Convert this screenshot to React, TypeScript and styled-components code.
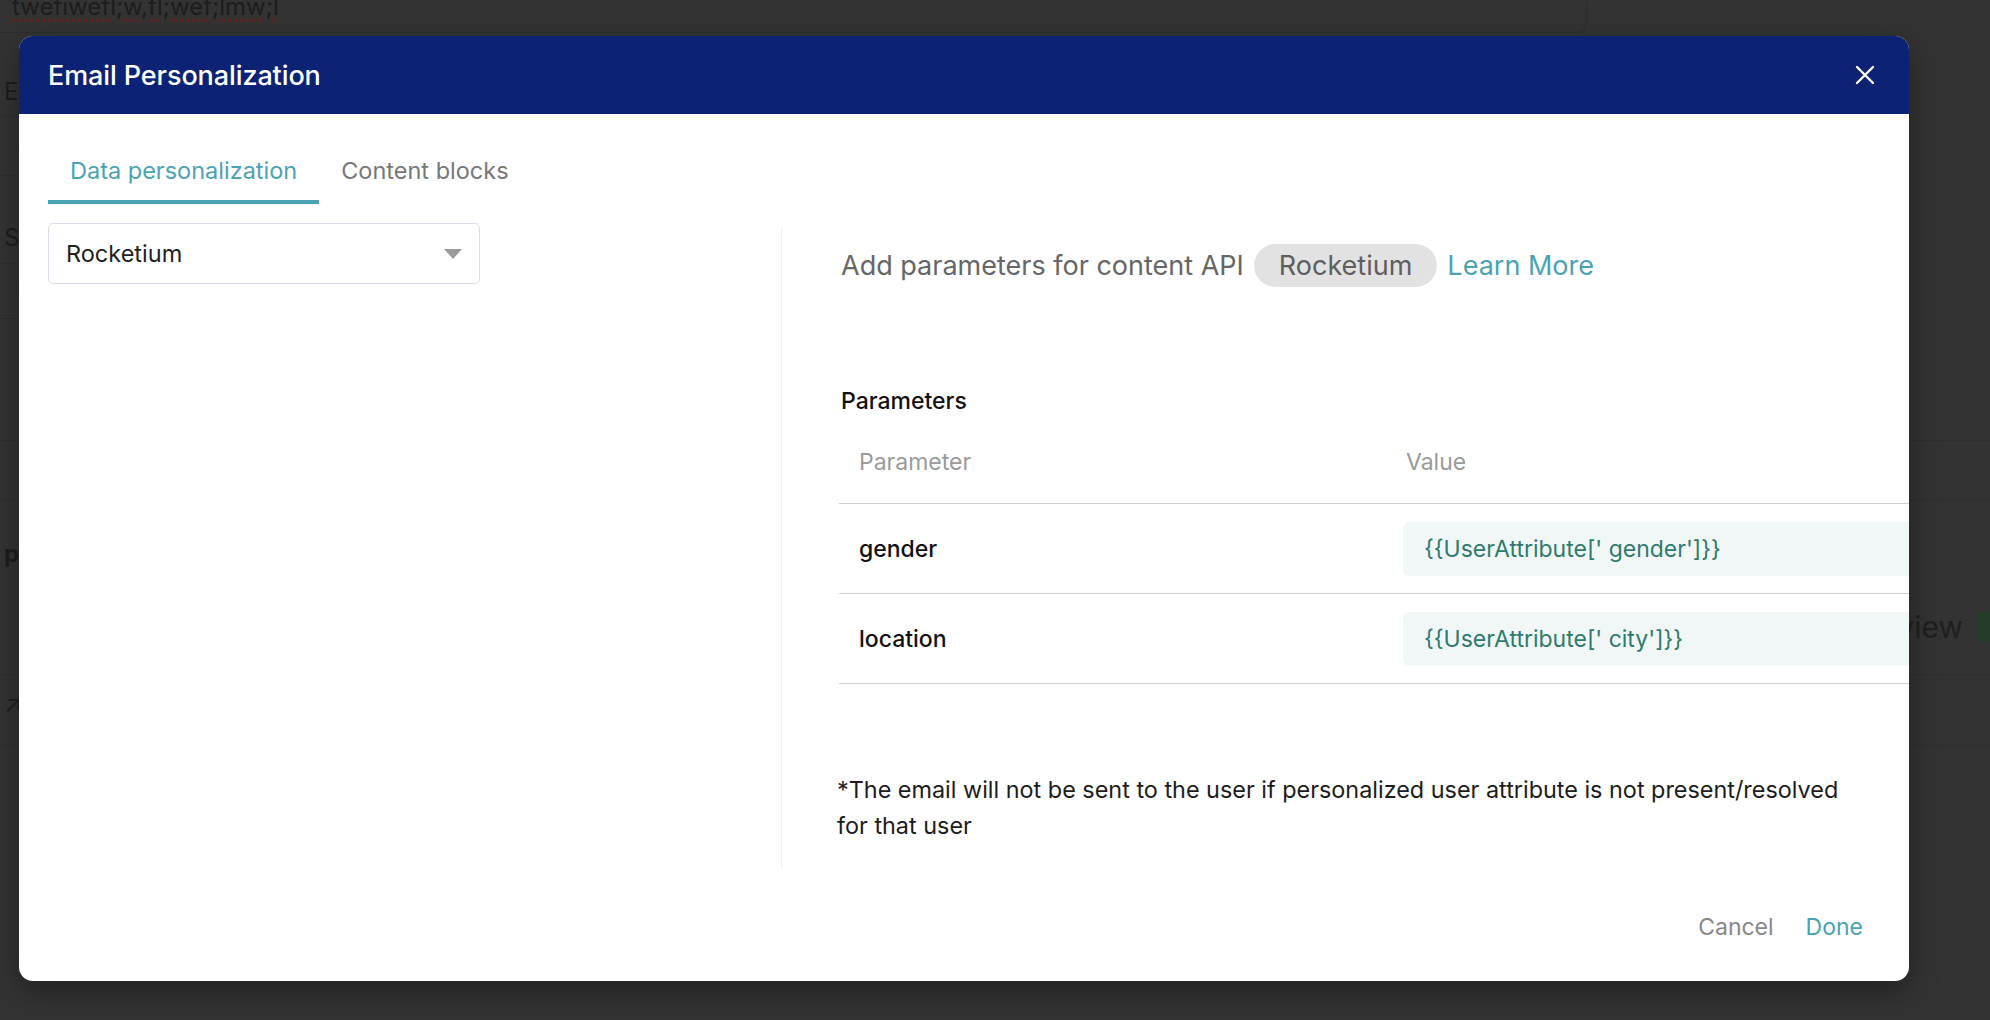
import * as React from "react";
import styled, { createGlobalStyle } from "styled-components";

const GlobalStyle = createGlobalStyle`
  html, body {
    margin: 0;
    padding: 0;
    background: #333333;
  }
  body {
    font-family: Inter, "Noto Sans", "Liberation Sans", sans-serif;
  }
  * {
    box-sizing: border-box;
  }
`;

const Screen = styled.div`
  position: relative;
  width: 1990px;
  height: 1020px;
  overflow: hidden;
  background: #333333;
`;

// page behind the overlay, dimmed
const BackPage = styled.div`
  display: flex;
  flex-direction: column;
  width: 100%;
  height: 100%;
  color: #1d1d1d;
  font-size: 24px;
`;

const BackInput = styled.div`
  flex: 0 0 33px;
  width: 1587px;
  padding-left: 12px;
  border-radius: 0 0 10px 0;
  border-bottom: 1px solid #2d2d2d;
  border-right: 1px solid #2d2d2d;
  line-height: 14px;
  overflow: hidden;
`;

const Squiggle = styled.span`
  text-decoration: underline dotted #5b2626;
  text-underline-offset: 4px;
  text-decoration-thickness: 3px;
`;

const BackRow = styled.div<{ $h: number; $line?: boolean }>`
  flex: 0 0 ${(p) => p.$h}px;
  display: flex;
  align-items: center;
  justify-content: space-between;
  padding-left: 4px;
  border-bottom: ${(p) => (p.$line ? "1px solid #2e2e2e" : "none")};
`;

const BackField = styled.div<{ $h: number }>`
  flex: 0 0 ${(p) => p.$h}px;
  display: flex;
  align-items: center;
  width: 900px;
  margin-left: -10px;
  padding-left: 26px;
  border: 1px solid #2d2d2d;
  border-radius: 8px;
  color: #262626;
  font-size: 22px;
`;

const BackRight = styled.div`
  display: flex;
  align-items: center;
  gap: 14px;
  margin-right: -31px;
  font-size: 30px;
  color: #1f1f1f;
`;

const BackBadge = styled.span`
  display: flex;
  align-items: center;
  justify-content: center;
  width: 44px;
  height: 30px;
  border-radius: 5px;
  background: #243b27;
  color: #3e5f41;
  font-size: 20px;
  font-weight: 700;
`;

const Layer = styled.div`
  position: absolute;
  inset: 0;
  padding: 36px 0 0 19px;
`;

const Modal = styled.div`
  width: 1890px;
  height: 945px;
  display: flex;
  flex-direction: column;
  background: #ffffff;
  border-radius: 14px;
  overflow: hidden;
  box-shadow: 0 10px 30px rgba(0, 0, 0, 0.35);
`;

const Header = styled.div`
  flex: 0 0 78px;
  display: flex;
  align-items: center;
  justify-content: space-between;
  padding: 0 33px 0 29px;
  background: #0b2275;
  color: #ffffff;
`;

const Title = styled.h1`
  margin: 0;
  font-size: 27px;
  font-weight: 500;
  letter-spacing: -0.1px;
`;

const CloseButton = styled.button`
  display: flex;
  align-items: center;
  justify-content: center;
  width: 22px;
  height: 22px;
  padding: 0;
  border: none;
  background: none;
  cursor: pointer;
`;

const Body = styled.div`
  flex: 1;
  display: flex;
  flex-direction: column;
  padding: 24px 0 0 29px;
  min-height: 0;
`;

const Tabs = styled.div`
  display: flex;
`;

const Tab = styled.button<{ $active?: boolean }>`
  padding: 18px 22px 14px;
  border: none;
  border-bottom: 4px solid ${(p) => (p.$active ? "#4aa3b5" : "transparent")};
  background: none;
  font-family: inherit;
  font-size: 23.5px;
  line-height: 30px;
  color: ${(p) => (p.$active ? "#4aa3b5" : "#777777")};
  cursor: pointer;
`;

const Content = styled.div`
  display: flex;
  margin-top: 19px;
`;

const LeftColumn = styled.div`
  flex: 0 0 733px;
`;

const Select = styled.div`
  display: flex;
  align-items: center;
  justify-content: space-between;
  width: 432px;
  height: 61px;
  padding: 0 17px 0 17px;
  border: 1px solid #dcdde8;
  border-radius: 5px;
  font-size: 23.5px;
  color: #1f1f1f;
`;

const Panel = styled.div`
  flex: 1;
  min-width: 0;
  margin-top: 3px;
  padding: 18px 0 26px 59px;
  border-left: 1px solid #f0f0f0;
`;

const ApiRow = styled.div`
  display: flex;
  align-items: center;
  gap: 10px;
  height: 43px;
  font-size: 27px;
  color: #666666;
`;

const Pill = styled.span`
  display: inline-flex;
  align-items: center;
  height: 43px;
  padding: 0 25px;
  border-radius: 22px;
  background: #e2e2e2;
  color: #5e5e5e;
`;

const LearnMore = styled.a`
  color: #4aa3b5;
  text-decoration: none;
`;

const SectionLabel = styled.div`
  margin-top: 100px;
  font-size: 23px;
  line-height: 28px;
  font-weight: 500;
  color: #111111;
`;

const Table = styled.div`
  width: 1200px;
  margin-left: -2px;
`;

const TableRow = styled.div<{ $head?: boolean }>`
  display: grid;
  grid-template-columns: 547px 1fr;
  align-items: center;
  padding: ${(p) => (p.$head ? "32px 0 26px" : "18px 0 17px")};
  border-bottom: 1px solid #cfcfcf;
  font-size: 23px;
  line-height: 30px;
  color: ${(p) => (p.$head ? "#9a9a9a" : "#111111")};
  font-weight: ${(p) => (p.$head ? 400 : 500)};
`;

const Cell = styled.div<{ $pad: number }>`
  padding-left: ${(p) => p.$pad}px;
`;

const ValueBox = styled.div`
  display: flex;
  align-items: center;
  height: 54px;
  padding-left: 21px;
  border-radius: 6px;
  background: #f1f7f7;
  color: #2e7b6d;
  font-weight: 400;
`;

const Note = styled.p`
  max-width: 1030px;
  margin: 88px 0 0 -4px;
  font-size: 23.4px;
  line-height: 36px;
  color: #1c1c1c;
`;

const Footer = styled.div`
  flex: 0 0 108px;
  display: flex;
  align-items: center;
  justify-content: flex-end;
  gap: 32px;
  padding-right: 46px;
`;

const FooterButton = styled.button<{ $primary?: boolean }>`
  padding: 0;
  border: none;
  background: none;
  font-family: inherit;
  font-size: 23px;
  color: ${(p) => (p.$primary ? "#4aa3b5" : "#888888")};
  cursor: pointer;
`;

const params = [
  { name: "gender", value: "{{UserAttribute[' gender']}}" },
  { name: "location", value: "{{UserAttribute[' city']}}" },
];

const App: React.FC = () => {
  return (
    <Screen>
      <GlobalStyle />
      <BackPage>
        <BackInput>
          <Squiggle>twefiwefl;w,fl;wef;lmw;l</Squiggle>
        </BackInput>
        <BackRow $h={33} />
        <BackRow $h={50}>E</BackRow>
        <BackField $h={60}>-</BackField>
        <BackRow $h={36} />
        <BackRow $h={51}>S</BackRow>
        <BackField $h={56}>S</BackField>
        <BackRow $h={122} $line />
        <BackRow $h={59} $line />
        <BackRow $h={26} />
        <BackRow $h={54}>
          <b>pl</b>
        </BackRow>
        <BackRow $h={95} $line>
          <span />
          <BackRight>
            view
            <BackBadge>N</BackBadge>
          </BackRight>
        </BackRow>
        <BackRow $h={56}>↗</BackRow>
        <BackRow $h={15} $line />
      </BackPage>

      <Layer>
        <Modal>
          <Header>
            <Title>Email Personalization</Title>
            <CloseButton aria-label="Close">
              <svg width="20" height="20" viewBox="0 0 20 20">
                <path d="M2 2 L18 18 M18 2 L2 18" stroke="#ffffff" strokeWidth="2.4" strokeLinecap="round" />
              </svg>
            </CloseButton>
          </Header>

          <Body>
            <Tabs>
              <Tab $active>Data personalization</Tab>
              <Tab>Content blocks</Tab>
            </Tabs>

            <Content>
              <LeftColumn>
                <Select>
                  Rocketium
                  <svg width="18" height="10" viewBox="0 0 18 10">
                    <path d="M0 0 H18 L9 10 Z" fill="#9a9a9a" />
                  </svg>
                </Select>
              </LeftColumn>

              <Panel>
                <ApiRow>
                  Add parameters for content API
                  <Pill>Rocketium</Pill>
                  <LearnMore href="#">Learn More</LearnMore>
                </ApiRow>

                <SectionLabel>Parameters</SectionLabel>
                <Table>
                  <TableRow $head>
                    <Cell $pad={20}>Parameter</Cell>
                    <Cell $pad={20}>Value</Cell>
                  </TableRow>
                  {params.map((p) => (
                    <TableRow key={p.name}>
                      <Cell $pad={20}>{p.name}</Cell>
                      <Cell $pad={17}>
                        <ValueBox>{p.value}</ValueBox>
                      </Cell>
                    </TableRow>
                  ))}
                </Table>

                <Note>
                  *The email will not be sent to the user if personalized user attribute is not present/resolved for that user
                </Note>
              </Panel>
            </Content>
          </Body>

          <Footer>
            <FooterButton>Cancel</FooterButton>
            <FooterButton $primary>Done</FooterButton>
          </Footer>
        </Modal>
      </Layer>
    </Screen>
  );
};

export default App;
